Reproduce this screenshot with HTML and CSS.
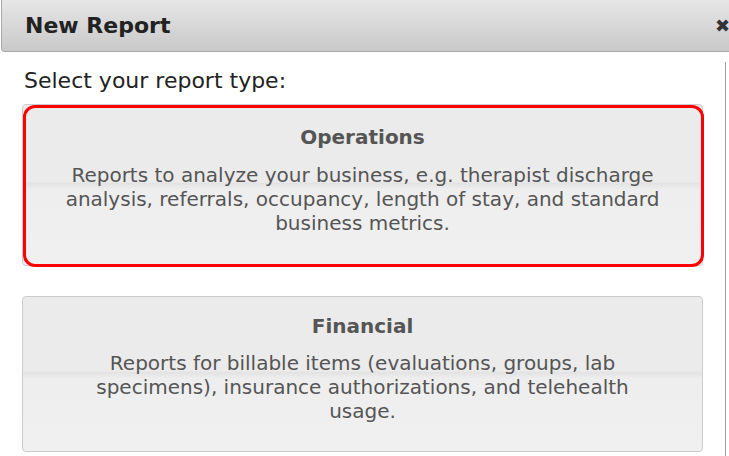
FILE: index.html
```html
<!DOCTYPE html>
<html>
<head>
<meta charset="utf-8">
<link rel="stylesheet" href="styles.css">
</head>
<body>
<div class="dialog">
  <div class="titlebar">
    <span class="title">New Report</span>
    <span class="close">✖</span>
  </div>
  <div class="content">
    <p class="prompt">Select your report type:</p>
    <div class="card selected">
      <div class="card-title">Operations</div>
      <div class="card-desc">Reports to analyze your business, e.g. therapist discharge analysis, referrals, occupancy, length of stay, and standard business metrics.</div>
    </div>
    <div class="card">
      <div class="card-title">Financial</div>
      <div class="card-desc">Reports for billable items (evaluations, groups, lab specimens), insurance authorizations, and telehealth usage.</div>
    </div>
  </div>
</div>
</body>
</html>
```
FILE: styles.css
```css
html, body {
  margin: 0;
  padding: 0;
  background: #fff;
  overflow: hidden;
}
body {
  font-family: "DejaVu Sans", Verdana, sans-serif;
  width: 729px;
  height: 456px;
}
.dialog {
  width: 760px;
  margin-left: 1px;
}
.titlebar {
  height: 51px;
  border: 1px solid #a8a8a8;
  border-top: none;
  border-right: none;
  border-radius: 0 0 0 4px;
  background: linear-gradient(#e6e6e6, #c9c9c9);
  display: flex;
  align-items: center;
  padding-left: 23px;
  box-sizing: content-box;
}
.title {
  font-weight: bold;
  font-size: 22px;
  color: #222;
  width: 690px;
}
.close {
  font-size: 18px;
  color: #333;
  font-weight: bold;
}
.content {
  width: 703px;
  margin-top: 10px;
  margin-left: -1px;
  padding-left: 22px;
  border-right: 1px solid #a0a0a0;
  height: 400px;
}
.prompt {
  margin: 0;
  font-size: 22px;
  line-height: 26px;
  color: #222;
  padding: 6px 0 10px 2px;
}
.card {
  position: relative;
  width: 681px;
  border: 1px solid #cccccc;
  border-radius: 4px;
  background: linear-gradient(#ebebeb 0%, #ebebeb 48%, #e3e3e3 49%, #eeeeee 53%, #f0f0f0 100%);
  text-align: center;
  color: #555;
  padding: 17px 41px 28px;
  box-sizing: border-box;
  margin-bottom: 30px;
}
.card.selected {
  padding-top: 20px;
  padding-bottom: 30px;
}
.card.selected::after {
  content: "";
  position: absolute;
  top: 0;
  bottom: -2px;
  left: 0;
  right: -2px;
  border: 3px solid #ff0000;
  border-radius: 12px;
}
.card-title {
  font-weight: bold;
  font-size: 20px;
  line-height: 24px;
}
.card-desc {
  margin-top: 13px;
  font-size: 20px;
  line-height: 24px;
}
.card.selected .card-desc {
  margin-top: 14px;
}
```
